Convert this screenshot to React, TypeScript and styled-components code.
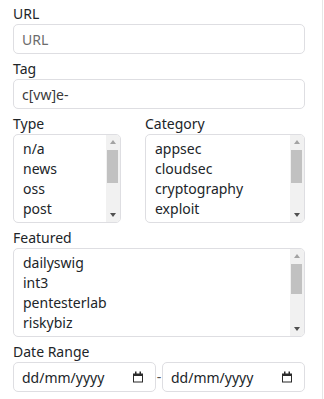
import React from 'react';
import styled, { createGlobalStyle } from 'styled-components';

const GlobalStyle = createGlobalStyle`
    html, body {
        margin: 0;
        padding: 0;
        background: #ffffff;
    }
    body {
        font-family: 'Noto Sans', 'Open Sans', sans-serif;
        font-size: 14px;
        color: #212529;
    }
`;

const Panel = styled.form`
    box-sizing: border-box;
    width: 323px;
    min-height: 399px;
    padding: 4px 17px 0 13px;
    border-right: 1px solid #e6e6e6;
    display: flex;
    flex-direction: column;
    gap: 5px;
`;

const Field = styled.div`
    display: flex;
    flex-direction: column;
    min-width: 0;
`;

const Label = styled.label`
    display: block;
    font-size: 14px;
    line-height: 19px;
    margin-bottom: 1px;
    color: #212529;
`;

const TextInput = styled.input`
    box-sizing: border-box;
    width: 100%;
    height: 30px;
    padding: 0 8px;
    border: 1px solid #dedee2;
    border-radius: 5px;
    font-family: 'Noto Sans', sans-serif;
    font-size: 14px;
    color: #3a3a3a;
    background: #ffffff;
    outline: none;

    &::placeholder {
        color: #6c6c6c;
    }
`;

// native listbox scrollbars get hidden in the screenshot, so the list is hand-built
const ListBox = styled.div`
    box-sizing: border-box;
    height: 89px;
    display: flex;
    border: 1px solid #dedee2;
    border-radius: 5px;
    background: #ffffff;
    overflow: hidden;
`;

const Options = styled.div`
    flex: 1;
    min-width: 0;
    padding: 4px 0 0 7px;
`;

const Option = styled.div`
    padding: 0 2px 1px;
    line-height: 19px;
    font-size: 14px;
    color: #212529;
    white-space: nowrap;
    cursor: default;
`;

const ScrollBar = styled.div`
    width: 14px;
    display: flex;
    flex-direction: column;
    background: #f1f1f1;
`;

const ScrollButton = styled.div<{ down?: boolean }>`
    height: 14px;
    flex: none;
    display: flex;
    align-items: center;
    justify-content: center;

    &::after {
        content: '';
        border-left: 3.5px solid transparent;
        border-right: 3.5px solid transparent;
        ${props =>
            props.down
                ? 'border-top: 4px solid #505050;'
                : 'border-bottom: 4px solid #a3a3a3;'}
    }
`;

const Track = styled.div`
    flex: 1;
    padding: 1px 2px 0 1px;
`;

const Thumb = styled.div`
    background: #c1c1c1;
`;

const Columns = styled.div`
    display: grid;
    grid-template-columns: 108px 160px;
    column-gap: 24px;
`;

const DateRow = styled.div`
    display: flex;
    align-items: center;
`;

const DateBox = styled.div`
    box-sizing: border-box;
    width: 143px;
    height: 30px;
    display: flex;
    align-items: center;
    padding: 0 11px 0 8px;
    border: 1px solid #dedee2;
    border-radius: 5px;
    background: #ffffff;
`;

const DateText = styled.input`
    flex: 1;
    min-width: 0;
    padding: 0;
    border: none;
    outline: none;
    background: transparent;
    font-family: 'Noto Sans', sans-serif;
    font-size: 14px;
    color: #212529;

    &::placeholder {
        color: #212529;
    }
`;

const Dash = styled.span`
    width: 6px;
    text-align: center;
    font-size: 14px;
    line-height: 14px;
    color: #555;
`;

const CalendarIcon = () => (
    <svg width="12" height="12" viewBox="0 0 12 12" aria-hidden="true">
        <path d="M1 2.5h10v9H1z M2 5v5.5h8V5z" fill="#2b2b2b" fillRule="evenodd" />
        <rect x="3" y="0.5" width="1.5" height="2.5" fill="#2b2b2b" />
        <rect x="7.5" y="0.5" width="1.5" height="2.5" fill="#2b2b2b" />
    </svg>
);

const DateField = ({ id }: { id: string }) => (
    <DateBox>
        <DateText id={id} type="text" placeholder="dd/mm/yyyy" />
        <CalendarIcon />
    </DateBox>
);

const MultiList = ({ id, items, thumb }: { id: string; items: string[]; thumb: number }) => (
    <ListBox id={id} role="listbox" aria-multiselectable="true">
        <Options>
            {items.map(item => (
                <Option key={item} role="option" aria-selected="false">
                    {item}
                </Option>
            ))}
        </Options>
        <ScrollBar>
            <ScrollButton />
            <Track>
                <Thumb style={{ height: thumb }} />
            </Track>
            <ScrollButton down />
        </ScrollBar>
    </ListBox>
);

const types = ['n/a', 'news', 'oss', 'post'];
const categories = ['appsec', 'cloudsec', 'cryptography', 'exploit'];
const featured = ['dailyswig', 'int3', 'pentesterlab', 'riskybiz'];

const App = () => (
    <>
        <GlobalStyle />
        <Panel onSubmit={e => e.preventDefault()}>
            <Field>
                <Label htmlFor="url">URL</Label>
                <TextInput id="url" type="text" placeholder="URL" />
            </Field>
            <Field>
                <Label htmlFor="tag">Tag</Label>
                <TextInput id="tag" type="text" defaultValue="c[vw]e-" />
            </Field>
            <Columns>
                <Field>
                    <Label htmlFor="type">Type</Label>
                    <MultiList id="type" items={types} thumb={33} />
                </Field>
                <Field>
                    <Label htmlFor="category">Category</Label>
                    <MultiList id="category" items={categories} thumb={33} />
                </Field>
            </Columns>
            <Field>
                <Label htmlFor="featured">Featured</Label>
                <MultiList id="featured" items={featured} thumb={30} />
            </Field>
            <Field>
                <Label htmlFor="from">Date Range</Label>
                <DateRow>
                    <DateField id="from" />
                    <Dash>-</Dash>
                    <DateField id="to" />
                </DateRow>
            </Field>
        </Panel>
    </>
);

export default App;
